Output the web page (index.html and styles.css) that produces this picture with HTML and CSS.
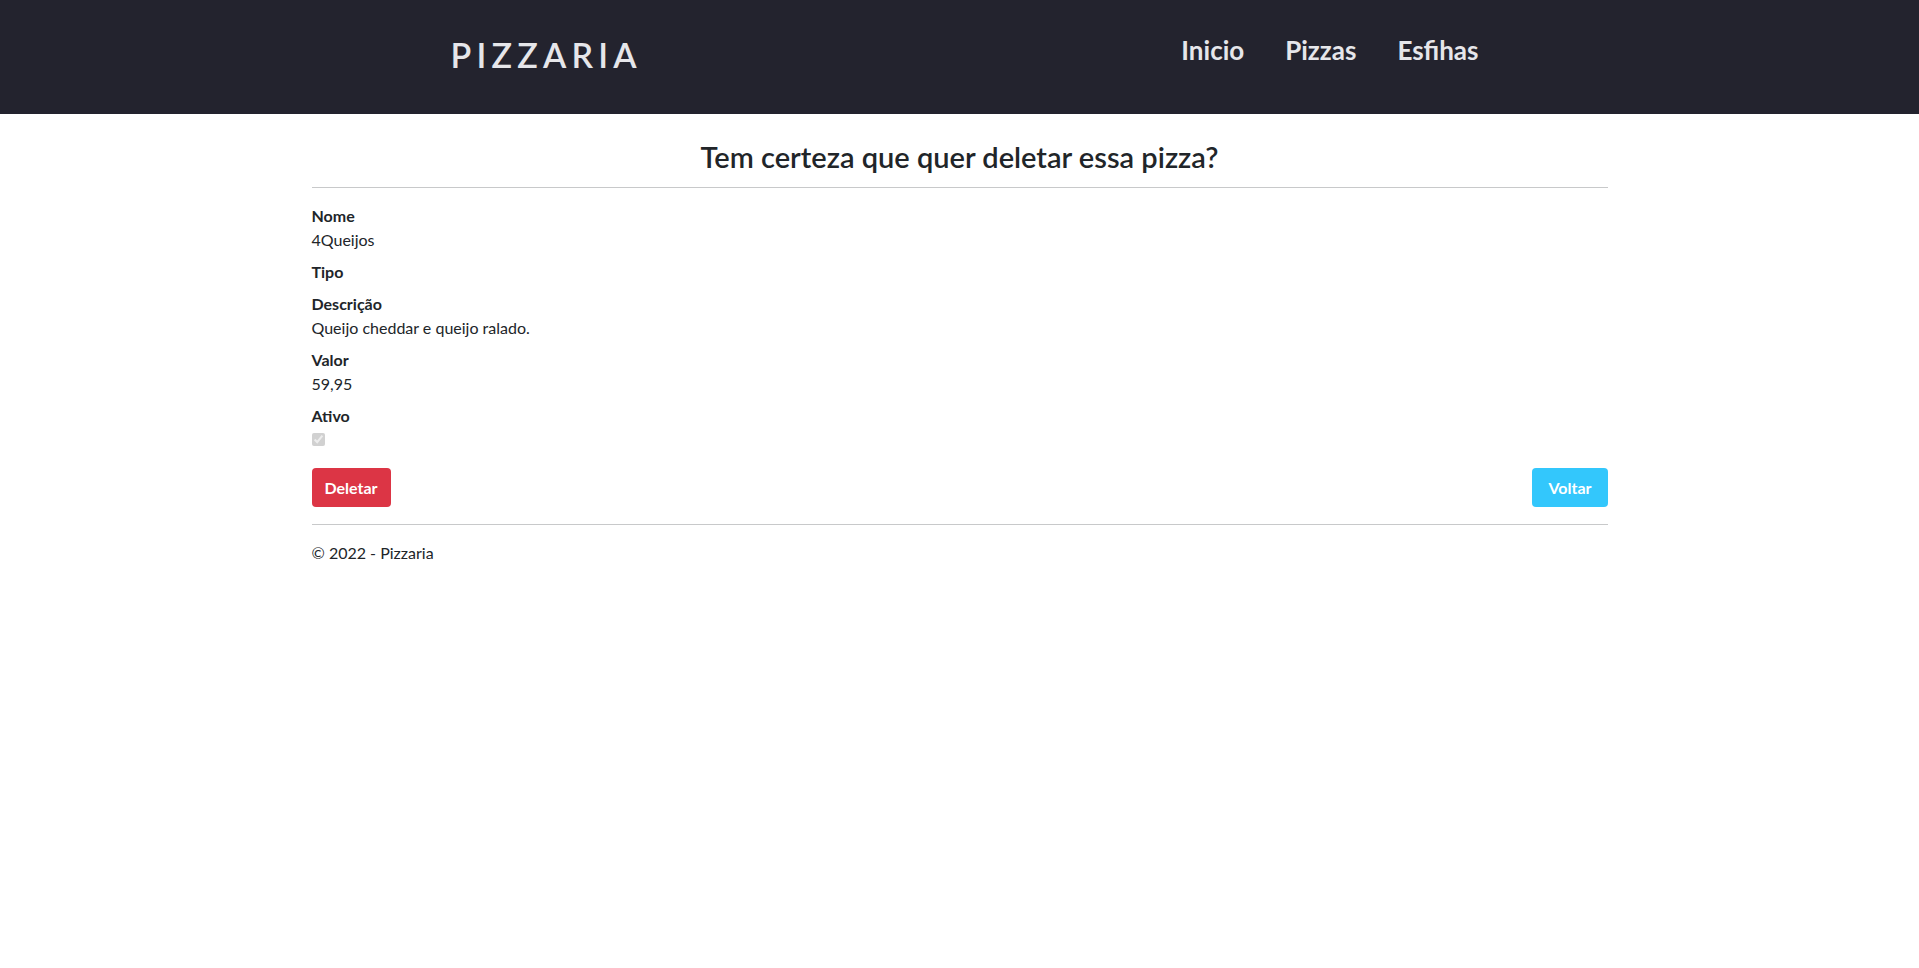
FILE: index.html
```html
<!DOCTYPE html>
<html lang="pt-BR">
<head>
<meta charset="utf-8">
<title>Deletar - Pizzaria</title>
<link rel="stylesheet" href="styles.css">
</head>
<body>
<header class="topbar">
  <div class="topbar-inner">
    <a class="brand" href="#">PIZZARIA</a>
    <nav class="nav">
      <a class="nav-link" href="#">Inicio</a>
      <a class="nav-link" href="#">Pizzas</a>
      <a class="nav-link" href="#">Esfihas</a>
    </nav>
  </div>
</header>
<div class="container">
  <main>
    <h3 class="page-title">Tem certeza que quer deletar essa pizza?</h3>
    <hr class="rule rule-title">
    <dl class="details">
      <dt>Nome</dt>
      <dd>4Queijos</dd>
      <dt>Tipo</dt>
      <dd></dd>
      <dt>Descrição</dt>
      <dd>Queijo cheddar e queijo ralado.</dd>
      <dt>Valor</dt>
      <dd>59,95</dd>
      <dt>Ativo</dt>
      <dd><input class="check" type="checkbox" checked disabled></dd>
    </dl>
    <form class="actions">
      <button type="button" class="btn btn-danger">Deletar</button>
      <a class="btn btn-info" href="#">Voltar</a>
    </form>
  </main>
  <hr class="rule rule-footer">
  <footer class="footer">© 2022 - Pizzaria</footer>
</div>
</body>
</html>
```

FILE: styles.css
```css
* { box-sizing: border-box; }

body {
  margin: 0;
  font-family: Lato, "Open Sans", "Liberation Sans", sans-serif;
  font-size: 16px;
  line-height: 1.5;
  color: #212529;
  background: #fff;
}

a { text-decoration: none; }

.topbar {
  background: #23232e;
  height: 114px;
}

.topbar-inner {
  width: 1042px;
  margin: 0 auto;
  height: 100%;
  padding: 0 2px 0 12px;
  display: flex;
  align-items: center;
  justify-content: space-between;
}

.brand {
  color: #e6e6ea;
  font-size: 34px;
  font-weight: 600;
  letter-spacing: 5.2px;
  line-height: 1;
  margin-top: -5px;
}

.nav {
  display: flex;
  gap: 41px;
  margin-top: -15px;
}

.nav-link {
  color: #e6e6ea;
  font-size: 26px;
  font-weight: 700;
  line-height: 1;
}

.container {
  width: 1320px;
  margin: 0 auto;
  padding: 0 12px;
}

.page-title {
  margin: 26px 0 0;
  text-align: center;
  font-size: 29px;
  font-weight: 600;
  line-height: 1.2;
}

.rule {
  border: 0;
  border-top: 1px solid #c8c9ca;
  margin: 0;
}

.rule-title { margin: 12px 0 16px; }

.details { margin: 0 0 16px; }

.details dt {
  font-weight: 700;
}

.details dd {
  margin: 0 0 8px;
}

.check {
  margin: 0;
  width: 13px;
  height: 13px;
  vertical-align: 0;
}

.actions {
  display: flex;
  justify-content: space-between;
  margin: 0;
}

.btn {
  display: inline-block;
  border: 0;
  border-radius: 4px;
  padding: 7px 12px;
  font-family: inherit;
  font-size: 16px;
  font-weight: 700;
  line-height: 25px;
  color: #fff;
  cursor: pointer;
}

.btn-danger { background: #dc3545; padding: 7px 13px; }
.btn-info { background: #33c7fc; padding: 7px 16px; }

.rule-footer { margin: 17px 0 16px; }

.footer {
  line-height: 24px;
}
```
